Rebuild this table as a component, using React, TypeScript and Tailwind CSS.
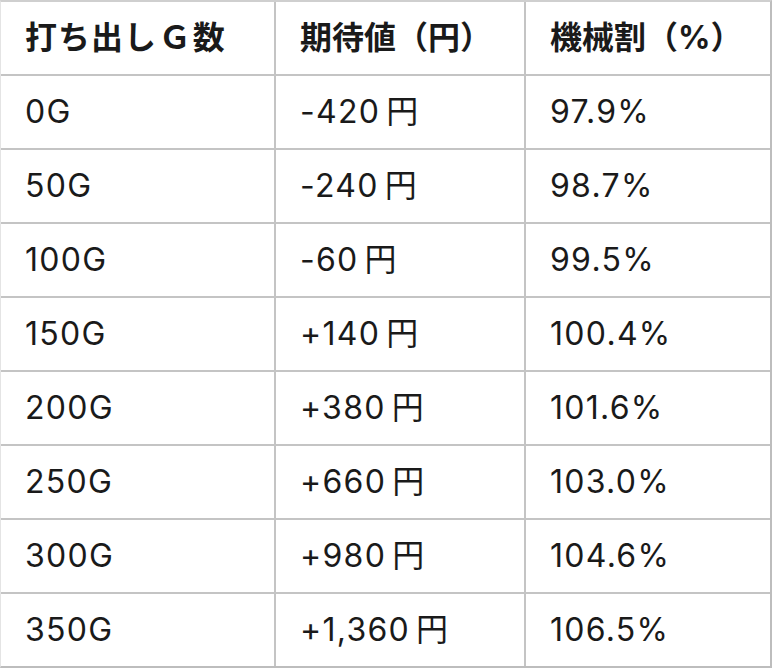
const rows: [string, string, string][] = [
  ['0G', '-420', '97.9%'],
  ['50G', '-240', '98.7%'],
  ['100G', '-60', '99.5%'],
  ['150G', '+140', '100.4%'],
  ['200G', '+380', '101.6%'],
  ['250G', '+660', '103.0%'],
  ['300G', '+980', '104.6%'],
  ['350G', '+1,360', '106.5%'],
];

function Cell({ children, head }: { children: React.ReactNode; head?: boolean }) {
  return (
    <div
      className={
        head
          ? 'flex h-[72px] items-center bg-white pl-6 text-[32px] font-bold'
          : 'flex h-[72px] items-center bg-white pl-6 text-[32px] tracking-[0.04em]'
      }
    >
      {children}
    </div>
  );
}

export default function App() {
  return (
    <div
      className="w-[775px] h-[669px] bg-white"
      style={{ fontFamily: '"Inter", "Noto Sans CJK JP", sans-serif' }}
    >
      <div className="w-[772px] border-t-2 border-r-2 border-b-2 border-l border-t-[#cfcfcf] border-r-[#bdbdbd] border-b-[#bdbdbd] border-l-[#e4e4e4] bg-[#c4c4c4]">
        <div className="grid grid-cols-[273px_248px_244px] gap-[2px] text-[#1a1a1a]">
          <Cell head>
            <span className="tracking-[0.03em]">打ち出し</span>
            <span className="mx-[2px]">Ｇ</span>
            <span>数</span>
          </Cell>
          <Cell head>期待値（円）</Cell>
          <Cell head>機械割（%）</Cell>
          {rows.map((r) => [
            <Cell key={r[0] + 'a'}>{r[0]}</Cell>,
            <Cell key={r[0] + 'b'}>
              {r[1]}
              <span className="ml-[6px]">円</span>
            </Cell>,
            <Cell key={r[0] + 'c'}>{r[2]}</Cell>,
          ])}
        </div>
      </div>
    </div>
  );
}
